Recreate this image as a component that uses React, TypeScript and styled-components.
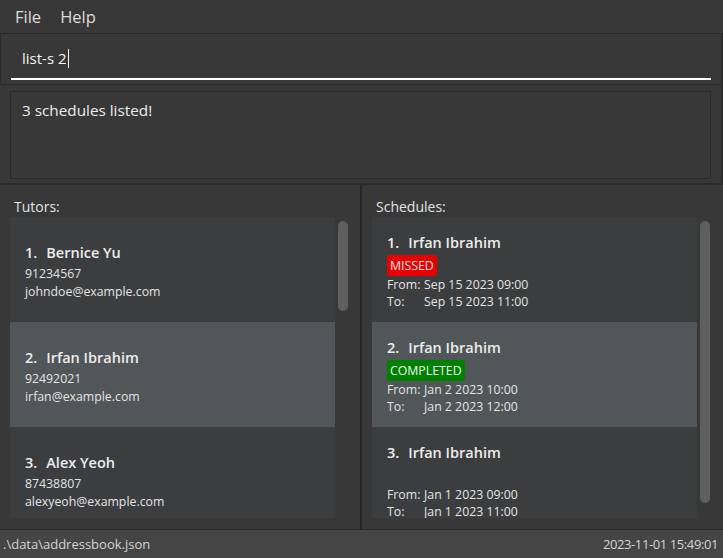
import styled, { createGlobalStyle } from "styled-components";

const GlobalStyle = createGlobalStyle`
  html, body {
    margin: 0;
    padding: 0;
    background: #383838;
  }
  * {
    box-sizing: border-box;
  }
`;

const Window = styled.div`
  width: 723px;
  height: 558px;
  display: flex;
  flex-direction: column;
  background: #383838;
  font-family: "Open Sans", "Noto Sans", sans-serif;
  color: #e6e6e6;
  overflow: hidden;
`;

const MenuBar = styled.div`
  height: 33px;
  display: flex;
  align-items: center;
  gap: 19px;
  padding-left: 15px;
  padding-bottom: 1px;
  font-size: 16.5px;
  color: #dcdcdc;
`;

const CommandPane = styled.div`
  height: 52px;
  border: 1px solid #2b2b2b;
  border-right-width: 2px;
  padding: 0 10px 0 10px;
  display: flex;
  align-items: flex-end;
`;

const CommandInput = styled.div`
  width: 100%;
  height: 44px;
  margin-bottom: 4px;
  border-bottom: 2px solid #ffffff;
  padding: 2px 11px 0;
  display: flex;
  align-items: center;
  font-size: 15px;
  color: #f2f2f2;
`;

const Caret = styled.span`
  display: inline-block;
  width: 1px;
  height: 19px;
  background: #ffffff;
  margin-left: 1px;
`;

const ResultPane = styled.div`
  height: 100px;
  padding: 6px 10px 6px 10px;
  border-bottom: 2px solid #2b2b2b;
  border-right: 2px solid #2b2b2b;
`;

const ResultBox = styled.div`
  height: 88px;
  border: 1px solid #2a2a2a;
  padding: 8px 11px;
  font-size: 15.3px;
  color: #ececec;
`;

const Lists = styled.div`
  flex: 1;
  display: flex;
  min-height: 0;
  border-bottom: 1px solid #2a2a2a;
`;

const Panel = styled.div<{ $width: number; $divider?: boolean }>`
  width: ${(p) => p.$width}px;
  display: flex;
  flex-direction: column;
  padding: 12px 0 11px 10px;
  border-right: ${(p) => (p.$divider ? "2px solid #262626" : "none")};
`;

const PanelTitle = styled.div`
  height: 20px;
  padding-left: 4px;
  font-size: 14px;
  line-height: 20px;
  color: #e2e2e2;
`;

const ListArea = styled.div`
  flex: 1;
  display: flex;
  min-height: 0;
`;

const CardList = styled.div`
  width: 325px;
  overflow: hidden;
  display: flex;
  flex-direction: column;
`;

const ScrollTrack = styled.div`
  width: 16px;
  padding: 4px 3px;
`;

const ScrollThumb = styled.div<{ $height: number }>`
  width: 10px;
  height: ${(p) => p.$height}px;
  border-radius: 5px;
  background: #5f5f5f;
`;

const Card = styled.div<{ $selected?: boolean }>`
  flex: 0 0 105px;
  height: 105px;
  padding: 3px 15px 0;
  display: flex;
  flex-direction: column;
  justify-content: center;
  background: ${(p) => (p.$selected ? "#515658" : "#3c3d3f")};
`;

const ScheduleCard = styled(Card)`
  justify-content: flex-start;
  padding-top: 15px;
`;

const NameRow = styled.div`
  display: flex;
  gap: 9px;
  height: 21px;
  line-height: 21px;
  font-size: 14.5px;
  font-weight: 600;
  color: #ececec;
`;

const Detail = styled.div`
  font-size: 12.3px;
  line-height: 18px;
  color: #e4e4e4;
`;

const TutorName = styled(NameRow)`
  margin-bottom: 2px;
`;

const BadgeRow = styled.div`
  height: 21px;
  margin-top: 2px;
  display: flex;
`;

const Badge = styled.span<{ $status: "missed" | "completed" }>`
  display: inline-flex;
  align-items: center;
  padding: 0 3px;
  border-radius: 3px;
  font-size: 12.3px;
  color: ${(p) => (p.$status === "missed" ? "#ffe6e6" : "#e6ffe6")};
  background: ${(p) => (p.$status === "missed" ? "#e60000" : "#008000")};
`;

const TimeRow = styled.div`
  display: flex;
  font-size: 12.3px;
  line-height: 17px;
  color: #e4e4e4;
`;

const TimeLabel = styled.span`
  width: 37px;
`;

const StatusBar = styled.div`
  height: 28px;
  display: flex;
  align-items: center;
  justify-content: space-between;
  padding: 0 5px 0 3px;
  background: #454545;
  font-size: 13px;
  color: #d4d4d4;
`;

const Clock = styled.span`
  letter-spacing: -0.4px;
`;

const tutors = [
  { name: "Bernice Yu", phone: "91234567", email: "johndoe@example.com" },
  { name: "Irfan Ibrahim", phone: "92492021", email: "irfan@example.com" },
  { name: "Alex Yeoh", phone: "87438807", email: "alexyeoh@example.com" },
];

type Schedule = {
  name: string;
  status?: "missed" | "completed";
  from: string;
  to: string;
};

const schedules: Schedule[] = [
  { name: "Irfan Ibrahim", status: "missed", from: "Sep 15 2023 09:00", to: "Sep 15 2023 11:00" },
  { name: "Irfan Ibrahim", status: "completed", from: "Jan 2 2023 10:00", to: "Jan 2 2023 12:00" },
  { name: "Irfan Ibrahim", from: "Jan 1 2023 09:00", to: "Jan 1 2023 11:00" },
];

export default function App() {
  return (
    <>
      <GlobalStyle />
      <Window>
        <MenuBar>
          <span>File</span>
          <span>Help</span>
        </MenuBar>
        <CommandPane>
          <CommandInput>
            list-s 2<Caret />
          </CommandInput>
        </CommandPane>
        <ResultPane>
          <ResultBox>3 schedules listed!</ResultBox>
        </ResultPane>
        <Lists>
          <Panel $width={362} $divider>
            <PanelTitle>Tutors:</PanelTitle>
            <ListArea>
              <CardList>
                {tutors.map((t, i) => (
                  <Card key={i} $selected={i === 1}>
                    <TutorName>
                      <span>{i + 1}.</span>
                      <span>{t.name}</span>
                    </TutorName>
                    <Detail>{t.phone}</Detail>
                    <Detail>{t.email}</Detail>
                  </Card>
                ))}
              </CardList>
              <ScrollTrack>
                <ScrollThumb $height={90} />
              </ScrollTrack>
            </ListArea>
          </Panel>
          <Panel $width={361}>
            <PanelTitle>Schedules:</PanelTitle>
            <ListArea>
              <CardList>
                {schedules.map((s, i) => (
                  <ScheduleCard key={i} $selected={i === 1}>
                    <NameRow>
                      <span>{i + 1}.</span>
                      <span>{s.name}</span>
                    </NameRow>
                    <BadgeRow>
                      {s.status && (
                        <Badge $status={s.status}>{s.status.toUpperCase()}</Badge>
                      )}
                    </BadgeRow>
                    <TimeRow>
                      <TimeLabel>From:</TimeLabel>
                      <span>{s.from}</span>
                    </TimeRow>
                    <TimeRow>
                      <TimeLabel>To:</TimeLabel>
                      <span>{s.to}</span>
                    </TimeRow>
                  </ScheduleCard>
                ))}
              </CardList>
              <ScrollTrack>
                <ScrollThumb $height={282} />
              </ScrollTrack>
            </ListArea>
          </Panel>
        </Lists>
        <StatusBar>
          <span>.\data\addressbook.json</span>
          <Clock>2023-11-01 15:49:01</Clock>
        </StatusBar>
      </Window>
    </>
  );
}
